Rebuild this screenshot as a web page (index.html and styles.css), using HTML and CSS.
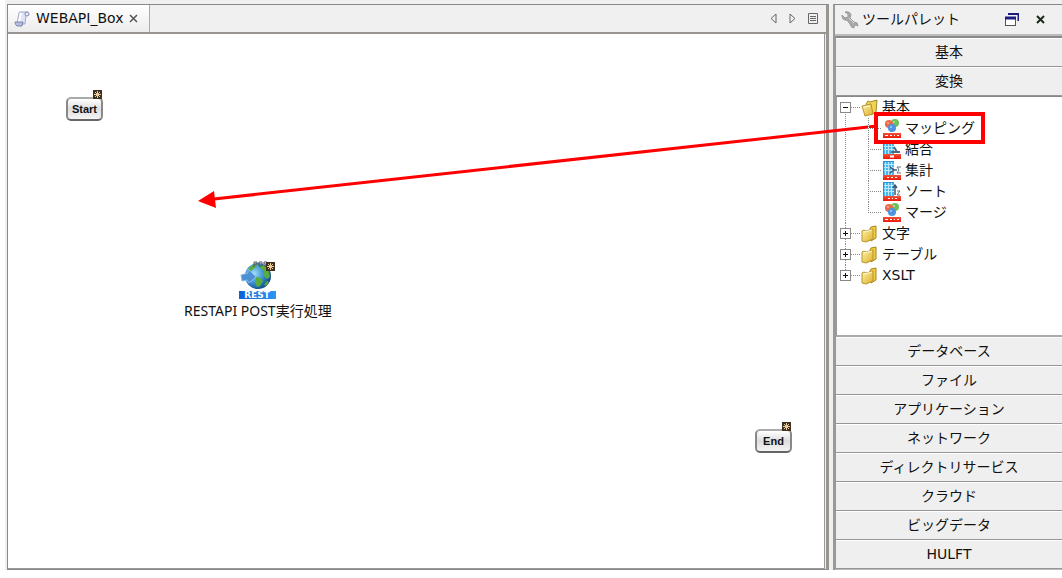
FILE: index.html
```html
<!DOCTYPE html>
<html lang="ja">
<head>
    <meta charset="UTF-8">
    <meta name="viewport" content="width=device-width, initial-scale=1.0">
    <title>WEBAPI_Box</title>
    <link rel="stylesheet" href="styles.css">
</head>
<body>

    <!-- shared icons -->
    <svg class="defs" width="0" height="0">
        <defs>
            <linearGradient id="gold" x1="0" y1="0" x2="1" y2="1">
                <stop offset="0" stop-color="#fff3a8"/>
                <stop offset="1" stop-color="#dcae28"/>
            </linearGradient>
            <linearGradient id="redBar" x1="0" y1="0" x2="0" y2="1">
                <stop offset="0" stop-color="#f0523c"/>
                <stop offset="1" stop-color="#f01808"/>
            </linearGradient>
            <linearGradient id="blueBar" x1="0" y1="0" x2="1" y2="0">
                <stop offset="0" stop-color="#0a60d8"/>
                <stop offset="1" stop-color="#2c96f4"/>
            </linearGradient>
            <radialGradient id="sea" cx="0.35" cy="0.4" r="0.7">
                <stop offset="0" stop-color="#a4dcf8"/>
                <stop offset="0.5" stop-color="#3c94d4"/>
                <stop offset="1" stop-color="#0c3f80"/>
            </radialGradient>
        </defs>
        <symbol id="folder" viewBox="0 0 18 18">
            <path d="M9 4l1-2 5-1v12l-5 3z" fill="#f0cc40" stroke="#a8861c"/>
            <path d="M1 6l2-1 2 1 7-2v10l-7 3-4-1z" fill="url(#gold)" stroke="#b8942c"/>
            <path d="M3 7l8-2" stroke="#fffbd8"/>
        </symbol>
        <symbol id="folderOpen" viewBox="0 0 18 18">
            <path d="M5 5l2-3 2 1 7-2-1 12-5 3z" fill="#f0d458" stroke="#a8861c"/>
            <path d="M1 7l9-2 2 10-8 2z" fill="url(#gold)" stroke="#b8942c"/>
            <path d="M3 8l6-1" stroke="#fffbd8"/>
        </symbol>
        <symbol id="balls" viewBox="0 0 18 19">
            <circle cx="12" cy="4" r="4" fill="#6cc05c"/>
            <circle cx="6" cy="5" r="4" fill="#ee6848"/>
            <circle cx="9" cy="9" r="4" fill="#4c94e0"/>
            <circle cx="11" cy="3" r="1" fill="#b4e4a4"/>
            <circle cx="5" cy="4" r="1" fill="#f8b49c"/>
            <circle cx="8" cy="8" r="1" fill="#a8d0f8"/>
            <rect y="14" width="18" height="5" fill="url(#redBar)"/>
            <path d="M2 16.500h3M7 16.500h2M11 16.500h1M14 16.500h2" stroke="#fff" stroke-width="1"/>
        </symbol>
        <symbol id="grid" viewBox="0 0 18 19">
            <rect width="11" height="14" fill="#4cb4ec"/>
            <path d="M0 3.500h11M0 6.500h11M0 9.500h11M2.500 0v14M5.500 0v14M8.500 0v14" stroke="#b8e8fc"/>
            <path d="M.5 0v14M0 .5h11" stroke="#3090d0"/>
            <rect y="14" width="18" height="5" fill="url(#redBar)"/>
        </symbol>
        <symbol id="join" viewBox="0 0 18 19">
            <use href="#grid"/>
            <path d="M8 12h9M11 7l3 5" stroke="#506880" stroke-width="2" fill="none"/>
            <path d="M7 16.500h4" stroke="#fff" stroke-width="2"/>
        </symbol>
        <symbol id="sum" viewBox="0 0 18 19">
            <use href="#grid"/>
            <path d="M7 6l4 3-4 3M11 9h3" stroke="#405870" stroke-width="1.500" fill="none"/>
            <path d="M18 6h-4l2 3-2 3h4" stroke="#607080" fill="none"/>
            <path d="M4 16.500h2M8 16.500h2M12 16.500h2" stroke="#fff"/>
        </symbol>
        <symbol id="sort" viewBox="0 0 18 19">
            <use href="#grid"/>
            <path d="M12 13V4M10 6l2-3 2 3" stroke="#405870" stroke-width="1.500" fill="none"/>
            <path d="M14 9h3l-3 4h3" stroke="#607080" fill="none"/>
            <path d="M5 16.500h2M9 16.500h1M12 16.500h2" stroke="#fff"/>
        </symbol>
        <symbol id="flag" viewBox="0 0 9 9">
            <rect width="9" height="9" fill="#42301f"/>
            <path d="M4.500 1v7M1 4.500h7M2 2l5 5M7 2l-5 5" stroke="#e8cc9c"/>
        </symbol>
    </svg>

    <div class="app">
        <main class="editor">
            <div class="tabBar">
                <div class="tab">
                    <svg class="icon16" viewBox="0 0 16 16">
                        <path d="M5 2q0-1 1-1h8l-2 3-1 9H3z" fill="#dfe4f8" stroke="#a4aacb"/>
                        <path d="M7 2l-2 9" stroke="#fff" stroke-width="2"/>
                        <path d="M1 11h8l-1 4H3q-2-1-2-4z" fill="#b5bce0" stroke="#7e86b0"/>
                        <circle cx="13" cy="3" r="2" fill="#eef" stroke="#8188b4"/>
                    </svg>
                    <span class="tabName">WEBAPI_Box</span>
                    <button class="toolBtn" aria-label="閉じる">
                        <svg width="9" height="9" viewBox="0 0 9 9"><path d="M1 1l7 7M8 1L1 8" stroke="#555" stroke-width="1.500"/></svg>
                    </button>
                </div>
                <div class="tabTools">
                    <button class="toolBtn" aria-label="前へ">
                        <svg width="7" height="11" viewBox="0 0 7 11"><path d="M6 1v9L1 5.500z" fill="none" stroke="#666"/></svg>
                    </button>
                    <button class="toolBtn" aria-label="次へ">
                        <svg width="7" height="11" viewBox="0 0 7 11"><path d="M1 1v9l5-4.500z" fill="none" stroke="#666"/></svg>
                    </button>
                    <button class="toolBtn" aria-label="一覧">
                        <svg width="10" height="11" viewBox="0 0 10 11"><path d="M.5.5h9v10h-9zM2 3.500h6M2 5.500h6M2 7.500h6" fill="none" stroke="#666"/></svg>
                    </button>
                </div>
            </div>
            <div class="canvas">
                <div class="node start">
                    <svg class="flag"><use href="#flag"/></svg>
                    <button class="nodeBtn">Start</button>
                </div>
                <div class="node rest">
                    <svg class="restIcon" viewBox="0 0 38 39">
                        <circle cx="19" cy="15" r="13" fill="url(#sea)"/>
                        <path d="M9 8q4-5 9-5l-1 3-4 3-2 4-3-1zM21 4l5 1 4 6 1 5-3 2-4-4 1-4-4-3zM17 16l5 1 2 3-3 5-3 1-2-5z" fill="#58ac40"/>
                        <path d="M28 20l2 1-3 4-2-1z" fill="#58ac40"/>
                        <path d="M2 14l7-2v-4l5 5 3 3-7 6-2-3-5 1z" fill="#4c90d4" stroke="#8cbcec"/>
                        <path d="M15 6V1h3v2h-3M20 1h3v4h-3zM28 1h-3v2h2v2h-2" fill="none" stroke="#556"/>
                        <rect y="30" width="37" height="8" fill="url(#blueBar)"/>
                        <text x="18" y="37" class="restText">REST</text>
                        <svg x="27" y="1" width="9" height="9"><use href="#flag"/></svg>
                    </svg>
                    <span class="nodeName">RESTAPI POST実行処理</span>
                </div>
                <div class="node end">
                    <svg class="flag"><use href="#flag"/></svg>
                    <button class="nodeBtn">End</button>
                </div>
            </div>
        </main>

        <aside class="palette">
            <div class="paletteHead">
                <svg class="icon18" viewBox="0 0 18 18">
                    <path d="M1 4l3 3 3-1V3L4 1q5-1 6 3l-1 3 4 4q4 0 4 4l-2-1-2 1v2q-3 0-4-4L6 9Q1 10 1 4z" fill="#aaa" stroke="#999"/>
                    <path d="M8 7l5 5" stroke="#ddd"/>
                </svg>
                <h1 class="paletteTitle">ツールパレット</h1>
                <button class="toolBtn" aria-label="フロート">
                    <svg width="14" height="13" viewBox="0 0 14 13">
                        <path d="M3 1h10.500v7" fill="none" stroke="#1c1c80" stroke-width="2"/>
                        <rect x=".5" y="4.500" width="10" height="8" fill="#fff" stroke="#555"/>
                        <path d="M0 5h11" stroke="#1c1c80" stroke-width="3"/>
                    </svg>
                </button>
                <button class="toolBtn close" aria-label="閉じる">
                    <svg width="9" height="9" viewBox="0 0 9 9"><path d="M1 1l7 7M8 1L1 8" stroke="#1c2c1c" stroke-width="2"/></svg>
                </button>
            </div>
            <div class="paletteBody">
                <button class="category">基本</button>
                <button class="category">変換</button>
                <ul class="tree">
                    <li class="branch">
                        <div class="row"><button class="toggle open" aria-label="折りたたむ"></button><svg class="icon18"><use href="#folderOpen"/></svg>基本</div>
                        <ul class="leaves">
                            <li class="leaf picked"><svg class="leafIcon"><use href="#balls"/></svg>マッピング</li>
                            <li class="leaf"><svg class="leafIcon"><use href="#join"/></svg>結合</li>
                            <li class="leaf"><svg class="leafIcon"><use href="#sum"/></svg>集計</li>
                            <li class="leaf"><svg class="leafIcon"><use href="#sort"/></svg>ソート</li>
                            <li class="leaf"><svg class="leafIcon"><use href="#balls"/></svg>マージ</li>
                        </ul>
                    </li>
                    <li class="branch">
                        <div class="row"><button class="toggle" aria-label="展開"></button><svg class="icon18"><use href="#folder"/></svg>文字</div>
                    </li>
                    <li class="branch">
                        <div class="row"><button class="toggle" aria-label="展開"></button><svg class="icon18"><use href="#folder"/></svg>テーブル</div>
                    </li>
                    <li class="branch">
                        <div class="row"><button class="toggle" aria-label="展開"></button><svg class="icon18"><use href="#folder"/></svg>XSLT</div>
                    </li>
                </ul>
                <button class="category">データベース</button>
                <button class="category">ファイル</button>
                <button class="category">アプリケーション</button>
                <button class="category">ネットワーク</button>
                <button class="category">ディレクトリサービス</button>
                <button class="category">クラウド</button>
                <button class="category">ビッグデータ</button>
                <button class="category">HULFT</button>
            </div>
        </aside>

        <!-- drag arrow from the palette to the canvas -->
        <svg class="dragArrow" viewBox="0 0 680 90">
            <path d="M679 7L16 80" stroke="#f00" stroke-width="3"/>
            <path d="M0 82l16-10 2 17z" fill="#f00"/>
        </svg>
    </div>

</body>
</html>
```

FILE: styles.css
```css
*{
    padding: 0;
    margin: 0;
    box-sizing: border-box;
}
body{
    background-color: #fff;
    font-family: "DejaVu Sans", "Noto Sans CJK JP", sans-serif;
    font-size: 14px;
    line-height: 21px;
    color: #111;
}
ul{
    list-style: none;
}
button{
    font: inherit;
    color: inherit;
}
.defs{
    position: absolute;
}
.app{
    position: relative;
    display: flex;
    gap: 4px;
    height: 100vh;
    padding: 4px 0 8px 7px;
    background: linear-gradient(#f0f0f0, #f0f0f0) 5px 0 / 100% calc(100% - 8px) no-repeat;
}
.icon16{
    width: 16px;
    height: 16px;
    flex: none;
}
.icon18{
    width: 18px;
    height: 18px;
    flex: none;
}
.toolBtn{
    display: flex;
    border: 0;
    background: none;
}

/* editor */
.editor{
    flex: 1;
    min-width: 0;
    display: flex;
    flex-direction: column;
    border: 1px solid #888;
    border-right: 3px solid #999590;
    background-color: #f0f0f0;
}
.tabBar{
    display: flex;
    justify-content: space-between;
    height: 29px;
    border-bottom: 2px solid #999590;
}
.tab{
    display: flex;
    align-items: center;
    gap: 6px;
    padding: 0 11px 0 6px;
    border-right: 1px solid #aaa;
    background: linear-gradient(#fff, #ececec);
}
.tabTools{
    display: flex;
    align-items: center;
    gap: 12px;
    padding-right: 8px;
}
.canvas{
    flex: 1;
    position: relative;
    margin-right: 1px;
    border-right: 1px solid #999;
    border-bottom: 1px solid #999;
    background-color: #fff;
}
.node{
    position: absolute;
    display: flex;
    flex-direction: column;
}
.start{
    left: 58px;
    top: 56px;
}
.rest{
    left: 176px;
    top: 227px;
    align-items: center;
}
.end{
    left: 747px;
    top: 388px;
}
.flag{
    z-index: 1;
    width: 9px;
    height: 9px;
    margin-right: 1px;
    align-self: flex-end;
}
.nodeBtn{
    width: 37px;
    height: 24px;
    margin-top: -2px;
    border: 2px solid #888;
    border-top-color: #aaa;
    border-bottom-color: #666;
    border-radius: 5px;
    background: linear-gradient(#fff, #ddd 50%, #f4f4f4);
    font: bold 11px/18px "Liberation Sans", sans-serif;
}
.restIcon{
    width: 38px;
    height: 39px;
}
.restText{
    fill: #fff;
    font: bold 9px "DejaVu Sans", sans-serif;
    text-anchor: middle;
}
.nodeName{
    font-family: "Noto Sans", "Noto Sans CJK JP", sans-serif;
    white-space: nowrap;
}

/* tool palette */
.palette{
    flex: none;
    width: 229px;
    display: flex;
    flex-direction: column;
    border-top: 1px solid #888;
    border-left: 2px solid #999;
    background-color: #f0f0f0;
}
.paletteHead{
    display: flex;
    align-items: center;
    height: 31px;
    padding: 0 17px 0 6px;
    border-bottom: 2px solid #bbb;
}
.paletteTitle{
    flex: 1;
    padding-left: 3px;
    font-size: 14px;
    font-weight: normal;
}
.close{
    margin-left: 17px;
}
.paletteBody{
    flex: 1;
    display: flex;
    flex-direction: column;
    border-top: 2px solid #888;
    border-left: 1px solid #999;
    border-bottom: 1px solid #bbb;
}
.category{
    flex: none;
    height: 29px;
    border: 0;
    border-top: 1px solid #fff;
    border-bottom: 1px solid #999590;
    background-color: #efefef;
}
.tree{
    flex: 1;
    padding: 0 0 0 5px;
    border-top: 1px solid #888;
    border-left: 1px solid #999;
    border-bottom: 2px solid #aaa;
    background-color: #fff;
}
.branch{
    background: repeating-linear-gradient(#888 0 1px, #fff 1px 2px) 3px 0 / 1px 100% no-repeat;
}
.branch:first-child{
    background-position: 3px 11px;
}
.branch:last-child{
    background-size: 1px 10px;
}
.row{
    display: flex;
    align-items: center;
    height: 21px;
}
.row .icon18{
    margin: 0 3px 0 10px;
}
.toggle{
    position: relative;
    width: 11px;
    height: 11px;
    margin-left: -2px;
    flex: none;
    border: 1px solid #888;
    background: linear-gradient(#111, #111) 2px 4px / 5px 1px no-repeat, linear-gradient(#111, #111) 4px 2px / 1px 5px no-repeat, #fff;
}
.toggle.open{
    background: linear-gradient(#111, #111) 2px 4px / 5px 1px no-repeat, #fff;
}
.toggle::after{
    content: "";
    position: absolute;
    left: 10px;
    top: 4px;
    width: 9px;
    border-top: 1px dotted #888;
}
.leaves{
    padding-left: 26px;
}
.leaf{
    position: relative;
    display: flex;
    align-items: center;
    gap: 4px;
    height: 21px;
    padding-left: 15px;
    background: repeating-linear-gradient(#888 0 1px, #fff 1px 2px) 0 0 / 1px 100% no-repeat, repeating-linear-gradient(90deg, #888 0 1px, #fff 1px 2px) 0 10px / 14px 1px no-repeat;
}
.leaf:last-child{
    background-size: 1px 11px, 14px 1px;
}
.leafIcon{
    width: 18px;
    height: 19px;
    flex: none;
}
.picked{
    z-index: 1;
}
/* frame around the item being dragged */
.picked::after{
    content: "";
    position: absolute;
    left: 6px;
    top: -6px;
    width: 103px;
    height: 24px;
    border: 4px solid #f00;
}
.dragArrow{
    position: absolute;
    right: 184px;
    top: 119px;
    width: 680px;
    height: 90px;
}
```
